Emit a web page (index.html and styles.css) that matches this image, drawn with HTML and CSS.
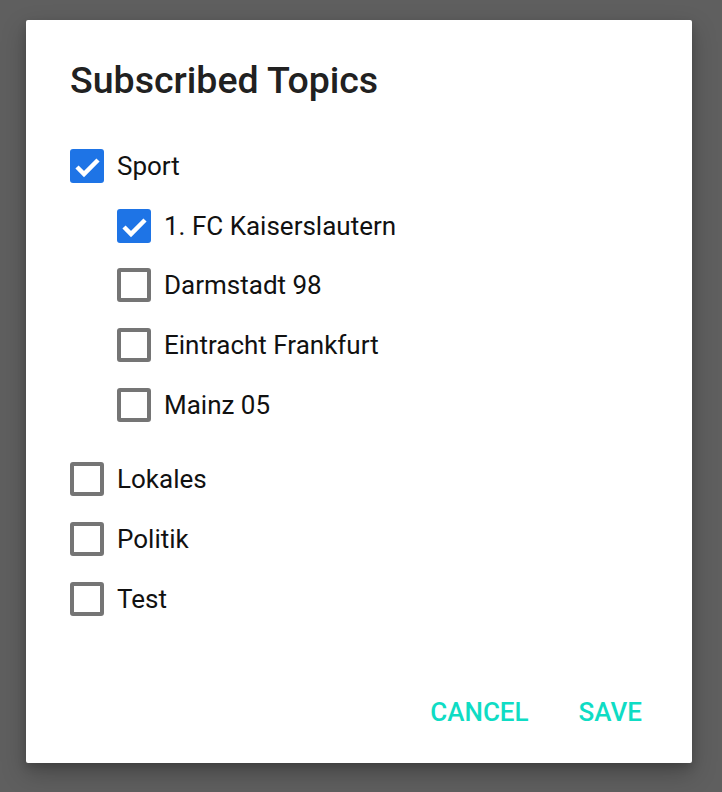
FILE: index.html
```html
<!DOCTYPE html>
<html>
<head>
<meta charset="utf-8">
<link rel="stylesheet" href="styles.css">
</head>
<body>
<div class="dialog">
  <h1 class="title">Subscribed Topics</h1>
  <div class="list">
    <div class="row"><span class="box checked"><svg viewBox="0 0 34 34"><path d="M7 18 L14 25 L28 11"/></svg></span><span class="label">Sport</span></div>
    <div class="children">
      <div class="row"><span class="box checked"><svg viewBox="0 0 34 34"><path d="M7 18 L14 25 L28 11"/></svg></span><span class="label">1. FC Kaiserslautern</span></div>
      <div class="row"><span class="box"></span><span class="label">Darmstadt 98</span></div>
      <div class="row"><span class="box"></span><span class="label">Eintracht Frankfurt</span></div>
      <div class="row"><span class="box"></span><span class="label">Mainz 05</span></div>
    </div>
    <div class="row"><span class="box"></span><span class="label">Lokales</span></div>
    <div class="row"><span class="box"></span><span class="label">Politik</span></div>
    <div class="row"><span class="box"></span><span class="label">Test</span></div>
  </div>
  <div class="actions">
    <button class="btn">CANCEL</button>
    <button class="btn">SAVE</button>
  </div>
</div>
</body>
</html>
```
FILE: styles.css
```css
html, body {
  margin: 0;
  padding: 0;
  background: #5f5f5f;
  height: 100%;
}
body {
  font-family: Roboto, "Liberation Sans", sans-serif;
  padding: 20px 0 0 26px;
  box-sizing: border-box;
}
.dialog {
  width: 666px;
  height: 743px;
  background: #fff;
  border-radius: 2px;
  box-shadow: 0 10px 24px rgba(0,0,0,0.25), 0 4px 8px rgba(0,0,0,0.15);
  box-sizing: border-box;
  padding: 40px 50px 0 44px;
  display: flex;
  flex-direction: column;
}
.title {
  margin: 0;
  font-size: 37.5px;
  line-height: 40px;
  font-weight: 500;
  color: #212121;
}
.list {
  margin-top: 36px;
  display: flex;
  flex-direction: column;
}
.children {
  padding-left: 47px;
  margin-bottom: 15px;
}
.row {
  height: 59.7px;
  display: flex;
  align-items: center;
}
.box {
  width: 34px;
  height: 34px;
  box-sizing: border-box;
  border: 4px solid #757575;
  border-radius: 3px;
  flex: none;
  display: flex;
}
.box.checked {
  background: #1e74e6;
  border: none;
}
.box svg {
  width: 34px;
  height: 34px;
}
.box svg path {
  fill: none;
  stroke: #fff;
  stroke-width: 4.5;
}
.label {
  margin-left: 13px;
  font-size: 26px;
  color: #111;
}
.actions {
  margin-top: 59px;
  display: flex;
  justify-content: flex-end;
  gap: 50px;
}
.btn {
  background: none;
  border: none;
  padding: 0;
  height: 48px;
  font-family: Roboto, "Liberation Sans", sans-serif;
  font-weight: 500;
  font-size: 26px;
  color: #0fdcc4;
}
```
